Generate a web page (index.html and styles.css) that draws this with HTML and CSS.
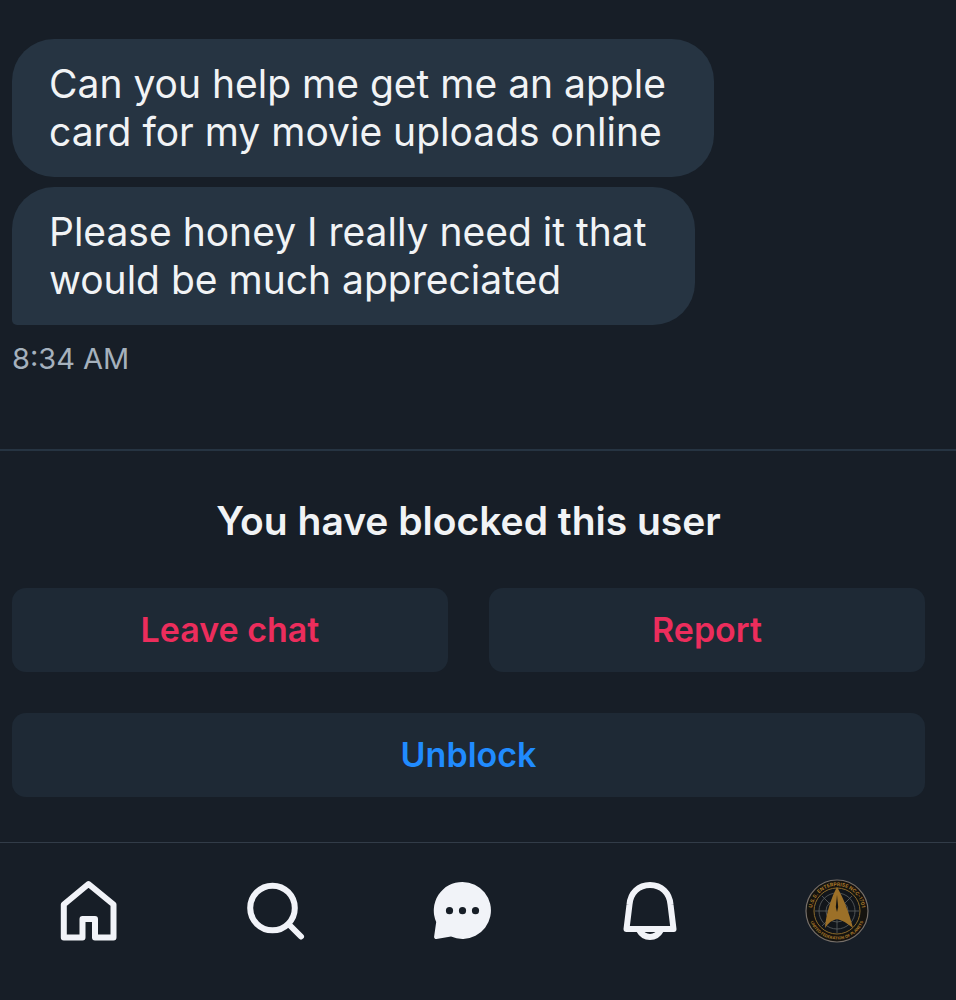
FILE: index.html
```html
<!DOCTYPE html>
<html lang="en">
<head>
    <meta charset="UTF-8">
    <meta name="viewport" content="width=device-width, initial-scale=1.0">
    <title>Chat</title>
    <link rel="stylesheet" href="styles.css">
</head>
<body>
    <main class="messages">
        <p class="bubble">Can you help me get me an apple<br>card for my movie uploads online</p>
        <p class="bubble bubble-last">Please honey I really need it that<br>would be much appreciated</p>
        <time class="time" datetime="08:34">8:34 AM</time>
    </main>

    <section class="blocked">
        <h1>You have blocked this user</h1>
        <div class="actions">
            <button type="button" class="danger">Leave chat</button>
            <button type="button" class="danger">Report</button>
            <button type="button" class="primary">Unblock</button>
        </div>
    </section>

    <nav class="tabs">
        <a href="#" aria-label="Home">
            <svg viewBox="0 0 64 64" fill="none" stroke="currentColor" stroke-width="6" stroke-linejoin="round">
                <path d="M7.800 25.500 32.500 5l25 20.500V58.500H39V40H26.500V58.500H7.800Z"/>
            </svg>
        </a>
        <a href="#" aria-label="Search">
            <svg viewBox="0 0 64 64" fill="none" stroke="currentColor" stroke-width="6" stroke-linecap="round">
                <circle cx="29.500" cy="29" r="22.300"/>
                <path d="M45.500 45 58 57.500"/>
            </svg>
        </a>
        <a href="#" aria-label="Chat">
            <svg viewBox="0 0 64 64" fill="currentColor">
                <path d="M31.500 3a28.500 28.500 0 1 1-11.500 54.600L5.500 60a2 2 0 0 1-2.400-2.200L5.200 43A28.500 28.500 0 0 1 31.500 3Z"/>
                <g class="dots">
                    <circle cx="18.500" cy="31.700" r="3.600"/>
                    <circle cx="31.500" cy="31.700" r="3.600"/>
                    <circle cx="44.500" cy="31.700" r="3.600"/>
                </g>
            </svg>
        </a>
        <a href="#" aria-label="Notifications">
            <svg viewBox="0 0 64 64" fill="none" stroke="currentColor" stroke-width="6" stroke-linejoin="round">
                <path d="M11.500 25.500C12.500 14 20.500 6 32 6s19.500 8 20.500 19.500L55.500 50H8.500Z"/>
                <path d="M21 51c2.200 4 6.200 7 11 7s8.800-3 11-7"/>
            </svg>
        </a>
        <a href="#" aria-label="Profile">
            <svg viewBox="0 0 64 64">
                <defs>
                    <path id="arc-top" d="M7.500 37a25 25 0 1 1 49 0"/>
                    <path id="arc-bottom" d="M3.500 32a28.500 28.500 0 0 0 57 0"/>
                </defs>
                <circle cx="32" cy="32" r="31" fill="#15130f" stroke="#77706a" stroke-width="1.200"/>
                <circle cx="32" cy="32" r="23" fill="#11151a" stroke="#8a6a2c" stroke-width="1"/>
                <g fill="none" stroke="#5c5f61" stroke-width=".8">
                    <circle cx="32" cy="32" r="18"/>
                    <circle cx="32" cy="32" r="11"/>
                    <path d="M10 32h44M32 10v44M17 17l30 30M47 17 17 47"/>
                </g>
                <path d="M32 8c6 10 12 25 16 41-6-5-11-8-16-9-5 1-9 4-12 9 1-15 7-32 12-41Z" fill="#9c7028"/>
                <path d="M32 16l1.200 12-1.200 5-1.200-5Z" fill="#15130f"/>
                <g class="badge-text">
                    <text><textPath href="#arc-top" startOffset="50%">U.S.S. ENTERPRISE NCC-1701</textPath></text>
                    <text class="badge-small"><textPath href="#arc-bottom" startOffset="50%">UNITED FEDERATION OF PLANETS</textPath></text>
                </g>
            </svg>
        </a>
    </nav>
</body>
</html>
```
FILE: styles.css
```css
* {
    box-sizing: border-box;
}
body {
    margin: 0;
    background: #171e27;
    color: #f1f3f5;
    font-family: Inter, sans-serif;
}
.messages {
    display: flex;
    flex-direction: column;
    align-items: flex-start;
    gap: 10px;
    padding: 39px 12px 67px;
}
.bubble {
    margin: 0;
    padding: 21px 48px 21px 37px;
    border-radius: 42px;
    background: #263442;
    font-size: 39px;
    line-height: 48px;
}
.bubble-last {
    border-bottom-left-radius: 5px;
}
.time {
    color: #a5b1bd;
    font-size: 29px;
    line-height: 47px;
}
.blocked {
    padding: 46px 31px 45px 12px;
    border-top: 2px solid #263442;
}
h1 {
    margin: 0 0 43px;
    text-align: center;
    font-size: 39px;
    font-weight: 600;
    line-height: 48px;
}
.actions {
    display: grid;
    grid-template-columns: 1fr 1fr;
    gap: 41px;
}
button {
    height: 84px;
    padding: 0 0 2px;
    border: none;
    border-radius: 14px;
    background: #1e2935;
    font-family: inherit;
    font-size: 34px;
    font-weight: 600;
}
.danger {
    color: #ec2d5c;
}
.primary {
    grid-column: 1 / -1;
    color: #208bfe;
}
.tabs {
    display: flex;
    justify-content: space-between;
    padding: 36px 87px 56px 56px;
    border-top: 1px solid #323c48;
}
.tabs a {
    color: #f1f3f8;
}
.tabs svg {
    display: block;
    width: 64px;
    height: 64px;
}
.dots {
    fill: #171e27;
}
.badge-text {
    fill: #a7782a;
    font-size: 5px;
    font-weight: 700;
    text-anchor: middle;
}
.badge-small {
    font-size: 4px;
}
```
